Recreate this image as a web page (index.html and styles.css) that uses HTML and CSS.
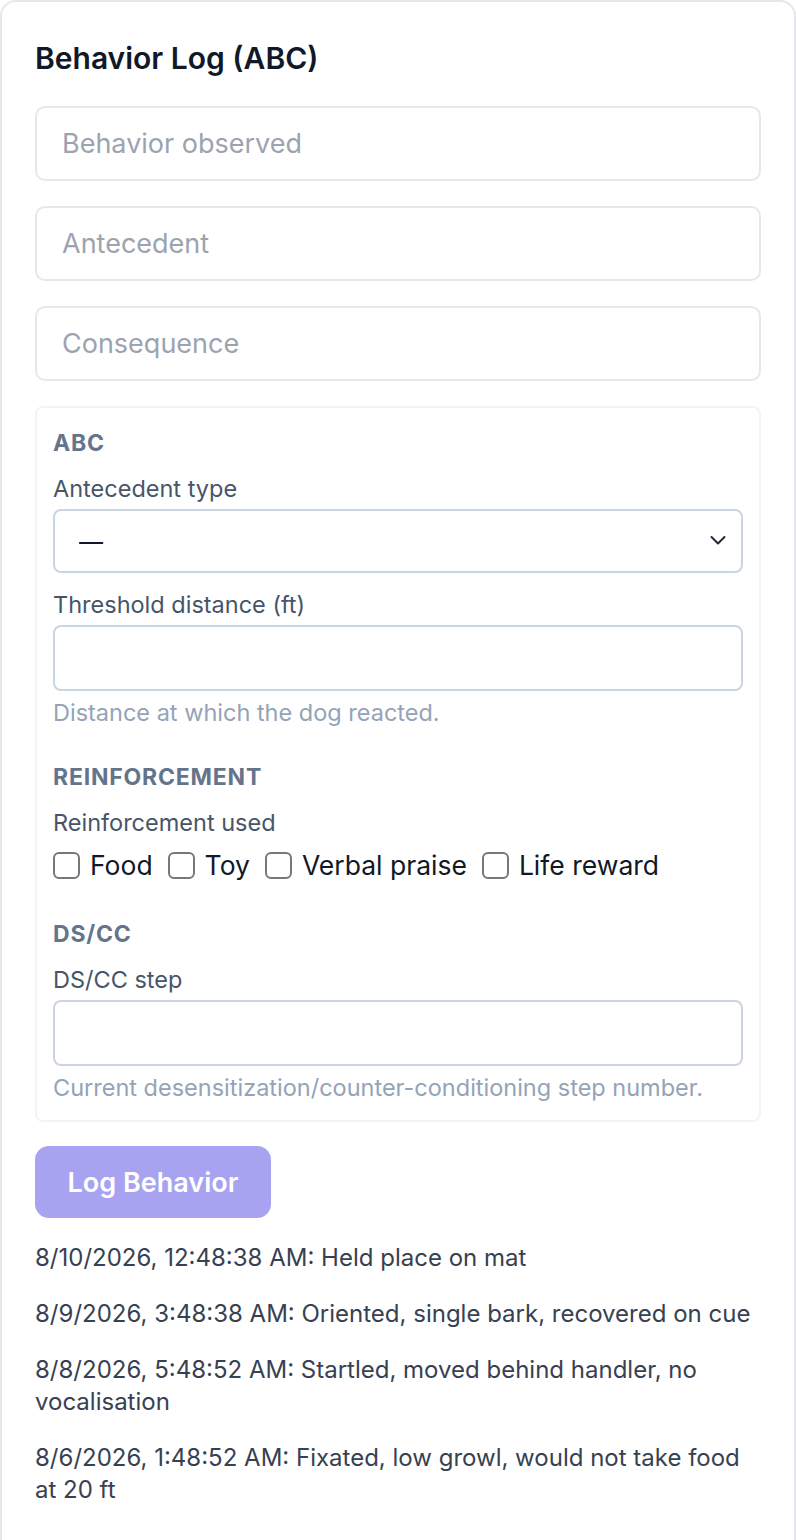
FILE: index.html
```html
<!DOCTYPE html>
<html lang="en">
<head>
  <meta charset="UTF-8" />
  <meta name="viewport" content="width=device-width, initial-scale=1.0" />
  <title>Behavior Log (ABC)</title>
  <link rel="stylesheet" href="styles.css">
</head>
<body>
  <div class="card">
    <h2>Behavior Log (ABC)</h2>
    <input class="field" type="text" placeholder="Behavior observed">
    <input class="field" type="text" placeholder="Antecedent">
    <input class="field" type="text" placeholder="Consequence">

    <div class="panel">
      <div class="section">ABC</div>
      <label class="label">Antecedent type</label>
      <div class="select-wrap">
        <select class="select">
          <option>—</option>
        </select>
        <svg class="chevron" width="18" height="18" viewBox="0 0 18 18">
          <path d="M2.5 6 L9 12.5 L15.5 6" fill="none" stroke="#1f2937" stroke-width="2" stroke-linecap="round" stroke-linejoin="round"/>
        </svg>
      </div>
      <label class="label">Threshold distance (ft)</label>
      <input class="box" type="number">
      <div class="help">Distance at which the dog reacted.</div>

      <div class="section gap">REINFORCEMENT</div>
      <label class="label">Reinforcement used</label>
      <div class="checks">
        <label class="check"><input type="checkbox"> Food</label>
        <label class="check"><input type="checkbox"> Toy</label>
        <label class="check"><input type="checkbox"> Verbal praise</label>
        <label class="check"><input type="checkbox"> Life reward</label>
      </div>

      <div class="section gap">DS/CC</div>
      <label class="label">DS/CC step</label>
      <input class="box" type="number">
      <div class="help">Current desensitization/counter-conditioning step number.</div>
    </div>

    <button class="submit" disabled>Log Behavior</button>

    <ul class="log">
      <li>8/10/2026, 12:48:38 AM: Held place on mat</li>
      <li>8/9/2026, 3:48:38 AM: Oriented, single bark, recovered on cue</li>
      <li>8/8/2026, 5:48:52 AM: Startled, moved behind handler, no vocalisation</li>
      <li>8/6/2026, 1:48:52 AM: Fixated, low growl, would not take food at 20 ft</li>
    </ul>
  </div>
</body>
</html>
```

FILE: styles.css
```css
body {
  margin: 0;
  font-family: Inter, "Noto Sans", Arial, sans-serif;
  background: #fff;
}
.card {
  box-sizing: border-box;
  width: 796px;
  min-height: 1539px;
  border: 2px solid #e5e7eb;
  border-radius: 16px;
  padding: 36px 33px 30px;
  display: flex;
  flex-direction: column;
}
h2 {
  margin: 0 0 28px;
  font-size: 30px;
  font-weight: 600;
  color: #111827;
  line-height: 40px;
}
.field {
  box-sizing: border-box;
  height: 75px;
  margin-bottom: 25px;
  padding: 0 25px;
  border: 2px solid #e5e7eb;
  border-radius: 10px;
  font-family: inherit;
  font-size: 27px;
  color: #111827;
  outline: none;
}
.field::placeholder {
  color: #9ca3af;
}
.panel {
  border: 2px solid #f3f4f6;
  border-radius: 8px;
  padding: 19px 16px 16px;
  display: flex;
  flex-direction: column;
}
.section {
  font-size: 23px;
  font-weight: 700;
  color: #64748b;
  letter-spacing: 0.8px;
  line-height: 32px;
  margin-bottom: 14px;
}
.section.gap {
  margin-top: 32px;
}
.label {
  font-size: 23.5px;
  color: #475569;
  line-height: 32px;
  margin-bottom: 4px;
}
.select-wrap {
  position: relative;
  margin-bottom: 16px;
}
.select {
  box-sizing: border-box;
  width: 100%;
  height: 64px;
  padding: 0 24px;
  border: 2px solid #cbd5e1;
  border-radius: 8px;
  background: #fff;
  font-family: inherit;
  font-size: 24px;
  color: #111827;
  appearance: none;
  -webkit-appearance: none;
}
.chevron {
  position: absolute;
  right: 16px;
  top: 22px;
}
.box {
  box-sizing: border-box;
  height: 66px;
  border: 2px solid #cbd5e1;
  border-radius: 8px;
  font-family: inherit;
  font-size: 26px;
  padding: 0 16px;
}
.help {
  font-size: 23.5px;
  color: #94a3b8;
  line-height: 32px;
  margin-top: 6px;
}
.checks {
  display: flex;
  gap: 15px;
  margin-top: 2px;
  margin-bottom: 1px;
}
.check {
  display: flex;
  align-items: center;
  gap: 10px;
  font-size: 26.5px;
  color: #111827;
  line-height: 40px;
}
.check input {
  appearance: none;
  -webkit-appearance: none;
  margin: 0;
  width: 27px;
  height: 27px;
  border: 2px solid #777;
  border-radius: 6px;
  background: #fff;
}
.submit {
  align-self: flex-start;
  margin-top: 24px;
  width: 236px;
  height: 72px;
  border: none;
  border-radius: 14px;
  background: #a8a3f0;
  color: #fff;
  font-family: inherit;
  font-size: 27px;
  font-weight: 600;
}
.log {
  list-style: none;
  margin: 24px 0 0;
  padding: 0;
  font-size: 24px;
  line-height: 32px;
  color: #374151;
}
.log li {
  margin-bottom: 24px;
}
```
